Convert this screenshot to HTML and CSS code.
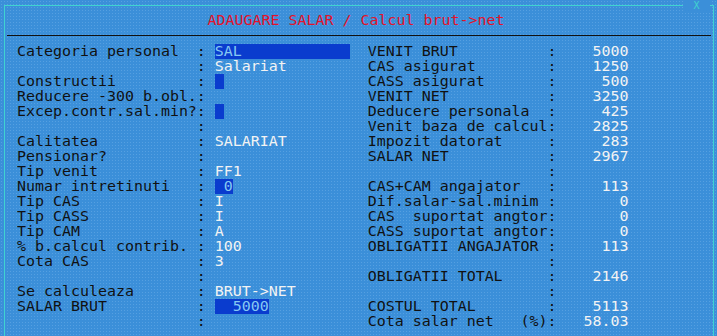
FILE: index.html
```html
<!DOCTYPE html>
<html lang="ro">

<head>
    <meta charset="UTF-8">
    <meta name="viewport" content="width=device-width, initial-scale=1.0">
    <title>Adaugare salar</title>
    <link rel="stylesheet" href="styles.css">
</head>

<body>
    <div class="window">
        <span class="close">X</span>
        <div class="title">ADAUGARE SALAR / Calcul brut-&gt;net</div>
        <div class="rule"></div>

        <div class="panel">
            <div class="col left">
                <div class="row"><span class="lbl">Categoria personal</span><span class="sep">:</span><span class="val hl w15">SAL</span></div>
                <div class="row"><span class="lbl"></span><span class="sep">:</span><span class="val">Salariat</span></div>
                <div class="row"><span class="lbl">Constructii</span><span class="sep">:</span><span class="val hl w1"></span></div>
                <div class="row"><span class="lbl">Reducere -300 b.obl.</span><span class="sep">:</span><span class="val"></span></div>
                <div class="row"><span class="lbl">Excep.contr.sal.min?</span><span class="sep">:</span><span class="val hl w1"></span></div>
                <div class="row"><span class="lbl"></span><span class="sep">:</span><span class="val"></span></div>
                <div class="row"><span class="lbl">Calitatea</span><span class="sep">:</span><span class="val">SALARIAT</span></div>
                <div class="row"><span class="lbl">Pensionar?</span><span class="sep">:</span><span class="val"></span></div>
                <div class="row"><span class="lbl">Tip venit</span><span class="sep">:</span><span class="val">FF1</span></div>
                <div class="row"><span class="lbl">Numar intretinuti</span><span class="sep">:</span><span class="val hl w2 num">0</span></div>
                <div class="row"><span class="lbl">Tip CAS</span><span class="sep">:</span><span class="val">I</span></div>
                <div class="row"><span class="lbl">Tip CASS</span><span class="sep">:</span><span class="val">I</span></div>
                <div class="row"><span class="lbl">Tip CAM</span><span class="sep">:</span><span class="val">A</span></div>
                <div class="row"><span class="lbl">% b.calcul contrib.</span><span class="sep">:</span><span class="val">100</span></div>
                <div class="row"><span class="lbl">Cota CAS</span><span class="sep">:</span><span class="val">3</span></div>
                <div class="row"><span class="lbl"></span><span class="sep">:</span><span class="val"></span></div>
                <div class="row"><span class="lbl">Se calculeaza</span><span class="sep">:</span><span class="val">BRUT-&gt;NET</span></div>
                <div class="row"><span class="lbl">SALAR BRUT</span><span class="sep">:</span><span class="val hl w6 num">5000</span></div>
                <div class="row"><span class="lbl"></span><span class="sep">:</span><span class="val"></span></div>
            </div>

            <div class="col right">
                <div class="row"><span class="lbl">VENIT BRUT</span><span class="sep">:</span><span class="val num w8">5000</span></div>
                <div class="row"><span class="lbl">CAS asigurat</span><span class="sep">:</span><span class="val num w8">1250</span></div>
                <div class="row"><span class="lbl">CASS asigurat</span><span class="sep">:</span><span class="val num w8">500</span></div>
                <div class="row"><span class="lbl">VENIT NET</span><span class="sep">:</span><span class="val num w8">3250</span></div>
                <div class="row"><span class="lbl">Deducere personala</span><span class="sep">:</span><span class="val num w8">425</span></div>
                <div class="row"><span class="lbl">Venit baza de calcul</span><span class="sep">:</span><span class="val num w8">2825</span></div>
                <div class="row"><span class="lbl">Impozit datorat</span><span class="sep">:</span><span class="val num w8">283</span></div>
                <div class="row"><span class="lbl">SALAR NET</span><span class="sep">:</span><span class="val num w8">2967</span></div>
                <div class="row"><span class="lbl"></span><span class="sep">:</span><span class="val"></span></div>
                <div class="row"><span class="lbl">CAS+CAM angajator</span><span class="sep">:</span><span class="val num w8">113</span></div>
                <div class="row"><span class="lbl">Dif.salar-sal.minim</span><span class="sep">:</span><span class="val num w8">0</span></div>
                <div class="row"><span class="lbl">CAS  suportat angtor</span><span class="sep">:</span><span class="val num w8">0</span></div>
                <div class="row"><span class="lbl">CASS suportat angtor</span><span class="sep">:</span><span class="val num w8">0</span></div>
                <div class="row"><span class="lbl">OBLIGATII ANGAJATOR</span><span class="sep">:</span><span class="val num w8">113</span></div>
                <div class="row"><span class="lbl"></span><span class="sep">:</span><span class="val"></span></div>
                <div class="row"><span class="lbl">OBLIGATII TOTAL</span><span class="sep">:</span><span class="val num w8">2146</span></div>
                <div class="row"><span class="lbl"></span><span class="sep">:</span><span class="val"></span></div>
                <div class="row"><span class="lbl">COSTUL TOTAL</span><span class="sep">:</span><span class="val num w8">5113</span></div>
                <div class="row"><span class="lbl">Cota salar net   (%)</span><span class="sep">:</span><span class="val num w8">58.03</span></div>
            </div>
        </div>
    </div>
</body>

</html>
```

FILE: styles.css
```css
body {
    margin: 0;
    height: 336px;
    overflow: hidden;
    background-color: #3b8fd9;
    background-image: radial-gradient(circle, rgba(120, 180, 235, 0.45) 0.6px, transparent 0.9px);
    background-size: 3px 3px;
    font-family: "DejaVu Sans Mono", "Liberation Mono", monospace;
    font-size: 14.95px;
    line-height: 15px;
    color: #111;
}

.window {
    position: relative;
    margin: 5px 0 0 4px;
    width: 708px;
    height: 330px;
    border: 1px solid #3fd3d0;
    border-bottom: none;
}

.close {
    position: absolute;
    top: -5px;
    left: 678px;
    width: 27px;
    font-size: 10px;
    line-height: 10px;
    text-align: center;
    color: #3fd3d0;
    background-color: #3b8fd9;
}

.title {
    margin-top: 7px;
    text-align: center;
    color: #e3122a;
    padding-right: 6px;
}

.rule {
    margin: 7px 2px 0 2px;
    height: 1px;
    background-color: #111;
}

.panel {
    display: flex;
    margin-top: 8px;
    padding-left: 12px;
}

.col.left {
    width: 39ch;
}

.row {
    display: flex;
    height: 15px;
    white-space: pre;
}

.lbl {
    width: 20ch;
}

.sep {
    width: 1ch;
}

.val {
    margin-left: 1ch;
    color: #f3f3f3;
}

.right .val {
    margin-left: 0;
}

.num {
    text-align: right;
}

.w1 { width: 1ch; }
.w2 { width: 2ch; }
.w6 { width: 6ch; }
.w8 { width: 8ch; }
.w15 { width: 15ch; }

.hl {
    background-color: #0a3cce;
    color: #86c8f2;
}
```
